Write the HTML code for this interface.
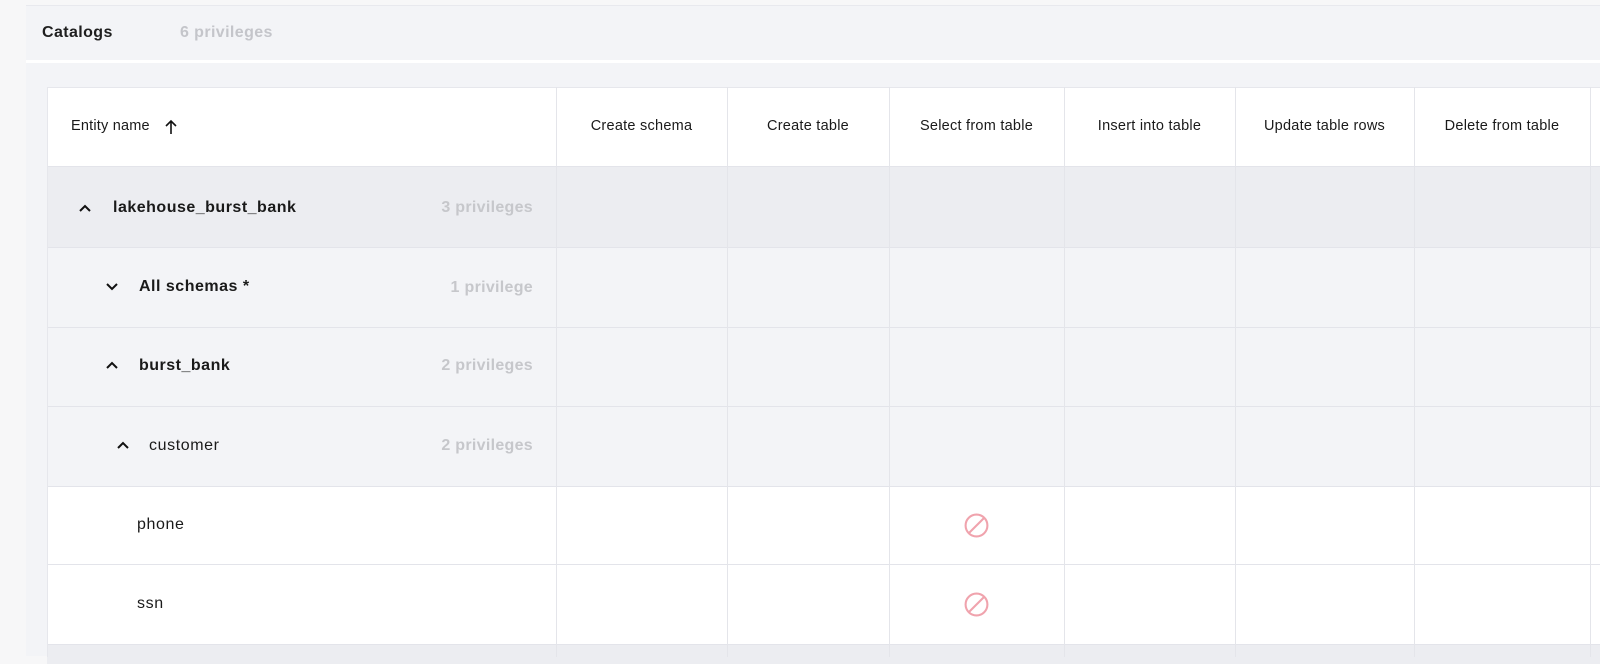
<!DOCTYPE html>
<html><head><meta charset="utf-8"><style>
*{margin:0;padding:0;box-sizing:border-box}
body{width:1600px;height:656px;overflow:hidden;background:#f7f7f8;font-family:"Liberation Sans",sans-serif;color:#1a1a1a;position:relative}
.panel{position:absolute;left:26px;top:5px;right:0;bottom:0;background:#f3f4f7;border-top:1px solid #e8e9ee}
.hdr{position:absolute;left:26px;top:5px;right:0;height:58px;border-bottom:3px solid #fff}
.t{position:absolute;white-space:nowrap}
.row{position:absolute;left:47px;right:0;border-top:1px solid #e3e4ea}
.vl{position:absolute;width:1px;background:#e4e5ea;top:87px;height:570px}
.cell{position:absolute;font-size:14.5px;letter-spacing:0.25px;text-align:center;top:87px;height:79px;line-height:79px}
.name{position:absolute;font-size:16px;font-weight:bold;letter-spacing:0.5px;white-space:nowrap}
.cnt{position:absolute;font-size:16px;font-weight:bold;letter-spacing:0.3px;color:#c6c7cb;right:1067px;white-space:nowrap}
.plain{position:absolute;font-size:16px;letter-spacing:0.6px;white-space:nowrap}
svg.c{position:absolute}
</style></head><body>
<div class="panel"></div>
<div class="hdr"></div>
<div class="t" style="left:42px;top:24px;font-size:16px;font-weight:bold;letter-spacing:0.4px;color:#1f1f1f">Catalogs</div>
<div class="t" style="left:180px;top:24px;font-size:16px;font-weight:bold;letter-spacing:0.4px;color:#c4c5ca">6 privileges</div>

<div class="row" style="top:87px;height:79px;background:#fff;border-top:1px solid #e6e7ec"></div>
<div class="row" style="top:166px;height:81px;background:#ecedf1"></div>
<div class="row" style="top:247px;height:80px;background:#f3f4f7"></div>
<div class="row" style="top:327px;height:79px;background:#f3f4f7"></div>
<div class="row" style="top:406px;height:80px;background:#f3f4f7"></div>
<div class="row" style="top:486px;height:78px;background:#fff"></div>
<div class="row" style="top:564px;height:80px;background:#fff"></div>
<div class="row" style="top:644px;height:20px;background:#ecedf1"></div>

<div class="vl" style="left:47px;background:#e6e7ec"></div>
<div class="vl" style="left:556px"></div>
<div class="vl" style="left:727px"></div>
<div class="vl" style="left:889px"></div>
<div class="vl" style="left:1064px"></div>
<div class="vl" style="left:1235px"></div>
<div class="vl" style="left:1414px"></div>
<div class="vl" style="left:1590px"></div>

<div class="t" style="left:71px;top:87px;height:79px;line-height:79px;font-size:14.5px;letter-spacing:0.2px">Entity name</div>
<svg class="c" style="left:163px;top:119px" width="16" height="16" viewBox="0 0 16 16"><path d="M8 15V2M3 7l5-5 5 5" fill="none" stroke="#111" stroke-width="1.6"/></svg>
<div class="cell" style="left:556px;width:171px">Create schema</div>
<div class="cell" style="left:727px;width:162px">Create table</div>
<div class="cell" style="left:889px;width:175px">Select from table</div>
<div class="cell" style="left:1064px;width:171px">Insert into table</div>
<div class="cell" style="left:1235px;width:179px">Update table rows</div>
<div class="cell" style="left:1414px;width:176px">Delete from table</div>

<svg class="c" style="left:78px;top:202px" width="14" height="12" viewBox="0 0 14 12"><path d="M2 9l5-5 5 5" fill="none" stroke="#111" stroke-width="2"/></svg>
<div class="name" style="left:113px;top:199px">lakehouse_burst_bank</div>
<div class="cnt" style="top:199px">3 privileges</div>

<svg class="c" style="left:105px;top:281px" width="14" height="12" viewBox="0 0 14 12"><path d="M2 3l5 5 5-5" fill="none" stroke="#111" stroke-width="2"/></svg>
<div class="name" style="left:139px;top:278px">All schemas *</div>
<div class="cnt" style="top:279px">1 privilege</div>

<svg class="c" style="left:105px;top:359px" width="14" height="12" viewBox="0 0 14 12"><path d="M2 9l5-5 5 5" fill="none" stroke="#111" stroke-width="2"/></svg>
<div class="name" style="left:139px;top:357px">burst_bank</div>
<div class="cnt" style="top:357px">2 privileges</div>

<svg class="c" style="left:116px;top:439px" width="14" height="12" viewBox="0 0 14 12"><path d="M2 9l5-5 5 5" fill="none" stroke="#111" stroke-width="2"/></svg>
<div class="plain" style="left:149px;top:437px">customer</div>
<div class="cnt" style="top:437px">2 privileges</div>

<div class="plain" style="left:137px;top:516px">phone</div>
<div class="plain" style="left:137px;top:595px">ssn</div>

<svg class="c" style="left:963px;top:512px" width="27" height="27" viewBox="0 0 26 26"><circle cx="13" cy="13" r="10.5" fill="none" stroke="#f0a3ad" stroke-width="2"/><path d="M6 20L20 6" stroke="#f0a3ad" stroke-width="2"/></svg>
<svg class="c" style="left:963px;top:591px" width="27" height="27" viewBox="0 0 26 26"><circle cx="13" cy="13" r="10.5" fill="none" stroke="#f0a3ad" stroke-width="2"/><path d="M6 20L20 6" stroke="#f0a3ad" stroke-width="2"/></svg>
</body></html>
